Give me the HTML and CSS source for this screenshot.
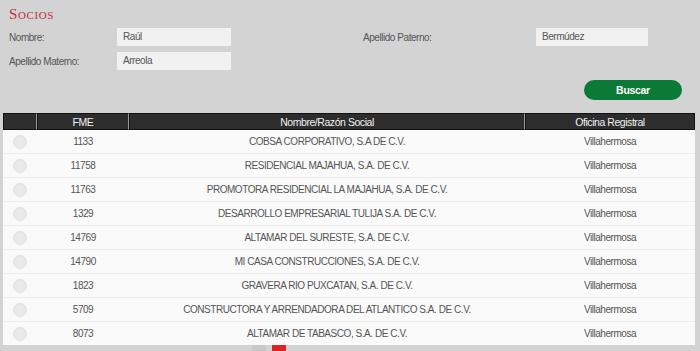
FILE: index.html
```html
<!DOCTYPE html>
<html lang="es">
<head>
<meta charset="utf-8">
<link rel="stylesheet" href="styles.css">
</head>
<body>
<div class="page">
  <h1 class="title">Socios</h1>
  <div class="form">
    <div class="row">
      <label class="lbl">Nombre:</label>
      <div class="inp">Raúl</div>
      <label class="lbl lbl2">Apellido Paterno:</label>
      <div class="inp inp2">Bermúdez</div>
    </div>
    <div class="row">
      <label class="lbl">Apellido Materno:</label>
      <div class="inp">Arreola</div>
    </div>
  </div>
  <div class="actions"><button class="btn">Buscar</button></div>
  <div class="tablewrap">
    <table class="grid">
      <thead>
        <tr><th class="c0"></th><th class="c1">FME</th><th class="c2">Nombre/Razón Social</th><th class="c3">Oficina Registral</th></tr>
      </thead>
      <tbody>
        <tr><td><span class="radio"></span></td><td>1133</td><td>COBSA CORPORATIVO, S.A DE C.V.</td><td>Villahermosa</td></tr>
        <tr><td><span class="radio"></span></td><td>11758</td><td>RESIDENCIAL MAJAHUA, S.A. DE C.V.</td><td>Villahermosa</td></tr>
        <tr><td><span class="radio"></span></td><td>11763</td><td>PROMOTORA RESIDENCIAL LA MAJAHUA, S.A. DE C.V.</td><td>Villahermosa</td></tr>
        <tr><td><span class="radio"></span></td><td>1329</td><td>DESARROLLO EMPRESARIAL TULIJA S.A. DE C.V.</td><td>Villahermosa</td></tr>
        <tr><td><span class="radio"></span></td><td>14769</td><td>ALTAMAR DEL SURESTE, S.A. DE C.V.</td><td>Villahermosa</td></tr>
        <tr><td><span class="radio"></span></td><td>14790</td><td>MI CASA CONSTRUCCIONES, S.A. DE C.V.</td><td>Villahermosa</td></tr>
        <tr><td><span class="radio"></span></td><td>1823</td><td>GRAVERA RIO PUXCATAN, S.A. DE C.V.</td><td>Villahermosa</td></tr>
        <tr><td><span class="radio"></span></td><td>5709</td><td>CONSTRUCTORA Y ARRENDADORA DEL ATLANTICO S.A. DE C.V.</td><td>Villahermosa</td></tr>
        <tr><td><span class="radio"></span></td><td>8073</td><td>ALTAMAR DE TABASCO, S.A. DE C.V.</td><td>Villahermosa</td></tr>
      </tbody>
    </table>
  </div>
  <div class="pager"><span class="pg"></span><span class="pg active"></span></div>
</div>
</body>
</html>
```
FILE: styles.css
```css
html, body {
  margin: 0;
  padding: 0;
  background: #d3d3d3;
}
body {
  font-family: "Liberation Sans", Arial, sans-serif;
  font-size: 10px;
  letter-spacing: -0.45px;
  color: #555;
  overflow: hidden;
}
.page {
  padding: 0 3px 0 3px;
}
.title {
  margin: 0;
  padding: 7px 0 0 6px;
  height: 19px;
  font-family: "Liberation Serif", serif;
  font-variant: small-caps;
  font-weight: normal;
  font-size: 15px;
  line-height: 15px;
  color: #c2303a;
  letter-spacing: 0.6px;
}
.form {
  display: flex;
  flex-direction: column;
  gap: 6px;
  padding-top: 2px;
}
.row {
  display: flex;
  align-items: center;
  height: 18px;
}
.lbl {
  width: 108px;
  padding-left: 6px;
  color: #555;
}
.inp {
  width: 108px;
  height: 18px;
  line-height: 18px;
  background: #f1f1f1;
  padding-left: 6px;
  color: #555;
}
.lbl2 {
  margin-left: 126px;
  width: 173px;
}
.inp2 {
  width: 106px;
}
.actions {
  display: flex;
  justify-content: flex-end;
  padding: 10px 15px 0 0;
}
.btn {
  width: 98px;
  height: 20px;
  border: none;
  border-radius: 10px;
  background: #0b7a36;
  color: #fff;
  font-family: "Liberation Sans", Arial, sans-serif;
  font-weight: bold;
  font-size: 10.5px;
  letter-spacing: -0.3px;
  padding: 0;
}
.tablewrap {
  margin-top: 13px;
  margin-right: 2px;
  background: #fafafa;
}
.grid {
  width: 100%;
  border-collapse: separate;
  border-spacing: 0;
  table-layout: fixed;
}
.grid th {
  background: #2d2d2d;
  color: #f2f2f2;
  font-weight: normal;
  height: 15px;
  padding: 0;
  border: 1px solid #111;
  border-right-color: #999;
  font-size: 10.5px;
  text-align: center;
}
.grid th:last-child { border-right-color: #111; }
.c0 { width: 32px; }
.c1 { width: 90px; }
.c2 { width: 394px; }
.grid td {
  height: 23px;
  padding: 0;
  text-align: center;
  border-bottom: 1px solid #ececec;
  color: #555;
  font-size: 10px;
}
.grid tbody tr:last-child td { border-bottom: none; }
.radio {
  display: inline-block;
  width: 12px;
  height: 12px;
  border-radius: 50%;
  background: #e9e9e9;
  border: 1px solid #e0e0e0;
  vertical-align: middle;
}
.pager {
  display: flex;
  gap: 6px;
  padding-left: 249px;
}
.pg {
  display: inline-block;
  width: 14px;
  height: 6px;
  background: #c8c8c8;
}
.pg.active { background: #d22; }
```
